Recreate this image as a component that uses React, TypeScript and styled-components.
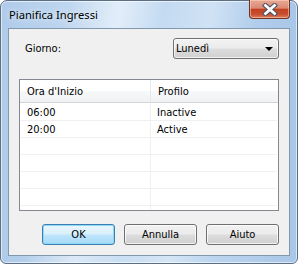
import React from 'react';
import styled, { createGlobalStyle, css } from 'styled-components';

const GlobalStyle = createGlobalStyle`
    html, body {
        margin: 0;
        padding: 0;
        background: #ffffff;
    }
    body {
        width: 298px;
        height: 264px;
        overflow: hidden;
    }
    * {
        box-sizing: border-box;
    }
`;

const uiFont = `"DejaVu Sans Condensed", "DejaVu Sans", Tahoma, sans-serif`;

const Window = styled.div`
    width: 298px;
    height: 264px;
    display: flex;
    flex-direction: column;
    padding: 0 7px 7px;
    border: 1px solid #5d6f84;
    border-radius: 7px 7px 6px 6px;
    background:
        linear-gradient(100deg, rgba(255,255,255,0) 20%, rgba(255,255,255,0.45) 35%, rgba(255,255,255,0) 48%, rgba(255,255,255,0.3) 62%, rgba(255,255,255,0) 75%),
        linear-gradient(to right, #afcbea, #cadff4 40%, #bdd6f0 70%, #a8c6e8);
    box-shadow: inset 0 0 0 1px rgba(255, 255, 255, 0.6);
`;

const TitleBar = styled.div`
    height: 27px;
    display: flex;
    justify-content: space-between;
    align-items: flex-start;
`;

const Title = styled.span`
    padding: 6px 0 0 1px;
    font-family: "Noto Sans", "Open Sans", sans-serif;
    font-size: 11.2px;
    line-height: 16px;
    color: #000;
    text-shadow: 0 0 6px rgba(255, 255, 255, 0.9);
`;

const CloseButton = styled.div`
    width: 41px;
    height: 19px;
    margin: -1px 0 0 0;
    display: flex;
    align-items: center;
    justify-content: center;
    border: 1px solid #6f3426;
    border-top: none;
    border-radius: 0 0 4px 4px;
    background: linear-gradient(#e9a997 0%, #d98a74 45%, #c4411f 52%, #c84e30 80%, #dd805f 100%);
    box-shadow: inset 0 0 0 1px rgba(255, 210, 190, 0.55);
`;

const Client = styled.div`
    flex: 1;
    display: flex;
    flex-direction: column;
    padding: 9px 10px 10px;
    border: 1px solid #8397ad;
    background: #f0f0f0;
    font-family: ${uiFont};
    font-size: 11px;
    color: #000;
`;

const FieldRow = styled.div`
    height: 21px;
    display: flex;
    align-items: center;
    justify-content: space-between;
`;

const Label = styled.span`
    padding-left: 6px;
`;

const ComboBox = styled.div`
    width: 106px;
    height: 21px;
    display: flex;
    align-items: center;
    justify-content: space-between;
    padding: 0 5px 0 2px;
    border: 1px solid #707070;
    border-radius: 3px;
    background: linear-gradient(#f3f3f3 0%, #ebebeb 48%, #dddddd 52%, #d0d0d0 100%);
    box-shadow: inset 0 0 0 1px rgba(255, 255, 255, 0.7);
`;

const Arrow = styled.span`
    width: 0;
    height: 0;
    border-left: 4px solid transparent;
    border-right: 4px solid transparent;
    border-top: 4px solid #000;
`;

const ListView = styled.div`
    height: 132px;
    margin-top: 20px;
    border: 1px solid #828790;
    background: #ffffff;
    overflow: hidden;
`;

const Header = styled.div`
    height: 23px;
    display: grid;
    grid-template-columns: 131px 1fr;
    border-bottom: 1px solid #d5d5d5;
    background: linear-gradient(#ffffff 0%, #ffffff 50%, #f7f8fa 50%, #f1f2f4 100%);
`;

const HeaderCell = styled.div<{ divider?: boolean }>`
    display: flex;
    align-items: center;
    padding-left: 7px;
    ${props => props.divider && css`
        border-right: 1px solid #e3e8ee;
    `}
`;

const Body = styled.div`
    margin: 1px 1px 0;
`;

const Row = styled.div`
    height: 17px;
    display: grid;
    grid-template-columns: 130px 1fr;
    border-bottom: 1px solid #f0f0f0;
`;

const Cell = styled.div<{ divider?: boolean }>`
    display: flex;
    align-items: center;
    padding-left: 6px;
    ${props => props.divider && css`
        border-right: 1px solid #f0f0f0;
    `}
`;

const ButtonRow = styled.div`
    margin-top: 13px;
    display: flex;
    justify-content: flex-end;
    gap: 9px;
`;

const Button = styled.div<{ primary?: boolean }>`
    width: 73px;
    height: 21px;
    display: flex;
    align-items: center;
    justify-content: center;
    border: 1px solid #707070;
    border-radius: 3px;
    background: linear-gradient(#f2f2f2 0%, #ebebeb 48%, #dddddd 52%, #cfcfcf 100%);
    box-shadow: inset 0 0 0 1px rgba(255, 255, 255, 0.75);
    ${props => props.primary && css`
        border-color: #3c7fb1;
        background: linear-gradient(#eaf6fd 0%, #d9f0fc 48%, #bee6fd 52%, #a7d9f5 100%);
        box-shadow: inset 0 0 0 1px #8fd8f7;
    `}
`;

const rows = [
    { time: '06:00', profile: 'Inactive' },
    { time: '20:00', profile: 'Active' },
    { time: '', profile: '' },
    { time: '', profile: '' },
    { time: '', profile: '' },
    { time: '', profile: '' },
    { time: '', profile: '' },
];

const CloseIcon = () => (
    <svg width="16" height="13" viewBox="0 0 16 13">
        <path d="M3.5 2.5 L12.5 10.5 M12.5 2.5 L3.5 10.5" stroke="#4a5360" strokeWidth="5" strokeLinecap="square" fill="none" />
        <path d="M3.5 2.5 L12.5 10.5 M12.5 2.5 L3.5 10.5" stroke="#ffffff" strokeWidth="2.8" strokeLinecap="square" fill="none" />
    </svg>
);

const App = () => {
    return (
        <>
            <GlobalStyle />
            <Window>
                <TitleBar>
                    <Title>Pianifica Ingressi</Title>
                    <CloseButton>
                        <CloseIcon />
                    </CloseButton>
                </TitleBar>
                <Client>
                    <FieldRow>
                        <Label>Giorno:</Label>
                        <ComboBox>
                            <span>Lunedì</span>
                            <Arrow />
                        </ComboBox>
                    </FieldRow>
                    <ListView>
                        <Header>
                            <HeaderCell divider>Ora d'Inizio</HeaderCell>
                            <HeaderCell>Profilo</HeaderCell>
                        </Header>
                        <Body>
                            {rows.map((row, index) => (
                                <Row key={index}>
                                    <Cell divider>{row.time}</Cell>
                                    <Cell>{row.profile}</Cell>
                                </Row>
                            ))}
                        </Body>
                    </ListView>
                    <ButtonRow>
                        <Button primary>OK</Button>
                        <Button>Annulla</Button>
                        <Button>Aiuto</Button>
                    </ButtonRow>
                </Client>
            </Window>
        </>
    );
};

export default App;
